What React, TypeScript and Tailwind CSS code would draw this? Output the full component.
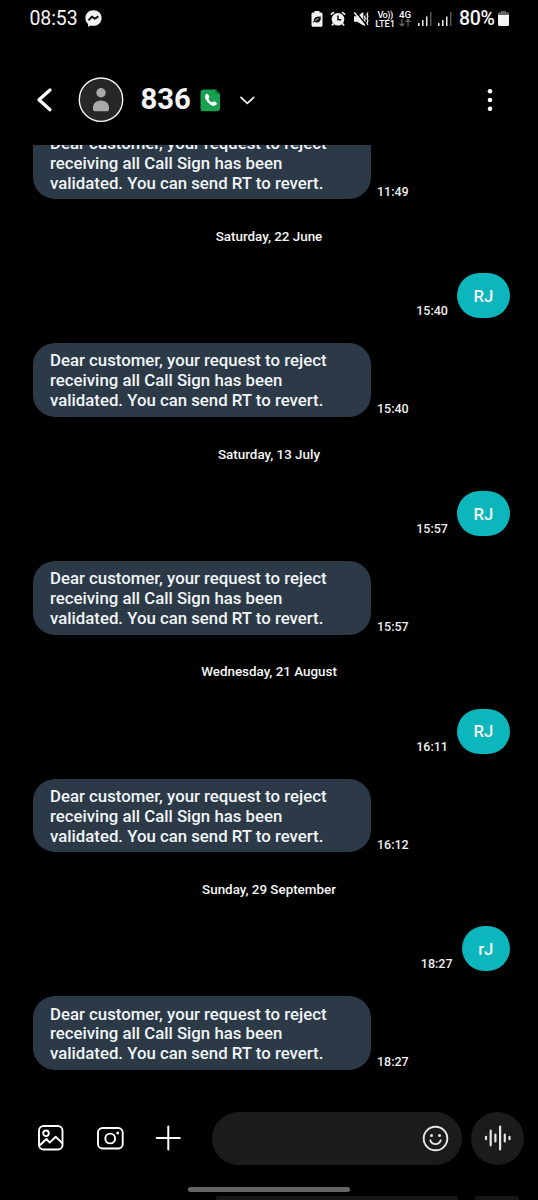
type Exchange = {
  date: string;
  sent: string;
  sentAt: string;
  receivedAt: string;
};

const REPLY = ["Dear customer, your request to reject", "receiving all Call Sign has been", "validated. You can send RT to revert."];

const exchanges: Exchange[] = [
  { date: "Saturday, 22 June", sent: "RJ", sentAt: "15:40", receivedAt: "15:40" },
  { date: "Saturday, 13 July", sent: "RJ", sentAt: "15:57", receivedAt: "15:57" },
  { date: "Wednesday, 21 August", sent: "RJ", sentAt: "16:11", receivedAt: "16:12" },
  { date: "Sunday, 29 September", sent: "rJ", sentAt: "18:27", receivedAt: "18:27" },
];

function SignalBars() {
  return (
    <svg width="14" height="14" viewBox="0 0 14 14" className="shrink-0">
      <path d="M0 11h1.500v3H0zM4 8h1.500v6H4zM8 4.500h1.500V14H8z" fill="#eee" />
      <path d="M12 0h1.500v14H12z" fill="#555" />
    </svg>
  );
}

function StatusBar() {
  return (
    <div className="flex h-[37px] shrink-0 items-center pl-[29.500px] pr-[29px]">
      <span className="w-[48px] text-[19.500px] leading-none tracking-[-0.1px]">08:53</span>
      <svg width="17" height="17" viewBox="0 0 17 17" className="ml-[7.500px]">
        <path d="M8.500.3C3.800.3.400 3.700.400 8c0 2.500 1 4.600 2.700 6V16.800l2.600-1.400c.9.300 1.800.4 2.800.4 4.700 0 8.100-3.400 8.100-7.800S13.200.3 8.500.3z" fill="#f2f2f2" />
        <path d="M3.500 10.300l3.400-3.700 2.800 2.200 3.700-2.400" fill="none" stroke="#111" strokeWidth="1.900" strokeLinejoin="round" />
      </svg>
      <div className="flex-1" />
      <svg width="12" height="16" viewBox="0 0 12 16" className="shrink-0">
        <path d="M3.500 0h5v1.500H10c1 0 1.500.6 1.500 1.500v11.300c0 .9-.6 1.500-1.500 1.500H2c-.9 0-1.500-.6-1.500-1.500V3c0-.9.600-1.500 1.500-1.500h1.500z" fill="#f2f2f2" />
        <path d="M9.800 5.500c.3 4-1 6-3.800 6-1.200 0-2-.4-2.500-1l-1.200 1.300-.6-.6 1.200-1.500C2.500 7 4.800 5.500 9.800 5.500z" fill="#111" />
        <path d="M4.200 9.500L7.300 7.500" stroke="#eee" strokeWidth=".8" />
      </svg>
      <svg width="16" height="16" viewBox="0 0 16 16" className="ml-[7.500px] shrink-0">
        <path d="M.9 3.700L3.900 1.200M15.100 3.700l-3-2.500" stroke="#f2f2f2" strokeWidth="1.700" />
        <circle cx="8" cy="8.300" r="6.300" fill="#f2f2f2" />
        <path d="M8 4.600v4.200h3.200" fill="none" stroke="#111" strokeWidth="1.500" />
        <path d="M3.500 12.500l-1.500 2M12.500 12.500l1.500 2" stroke="#f2f2f2" strokeWidth="1.800" />
      </svg>
      <svg width="15" height="16" viewBox="0 0 15 16" className="ml-[7.500px] shrink-0">
        <path d="M0 5.200h3.300L9.300 1v13.500l-6-3.800H0z" fill="#f2f2f2" />
        <path d="M1.300 0l10 13" stroke="#000" strokeWidth="1.500" />
        <path d="M.3 1.500l10.500 13" stroke="#f2f2f2" strokeWidth="1.500" />
        <path d="M11.300 4.500l-.8 1.500.8 1.500-.8 1.500.8 1.500M13.900 1.500l-.9 1.800.9 2-.9 2.200.9 2.200-.9 2.200.9 2" fill="none" stroke="#f2f2f2" strokeWidth="1.300" />
      </svg>
      <div className="ml-[6.500px] flex w-[20px] flex-col items-center text-[9.300px] font-medium leading-[9px]">
        <span className="tracking-[-0.6px]">Vo))</span>
        <span className="tracking-[-0.1px]">LTE1</span>
      </div>
      <div className="ml-[3.500px] flex w-[13px] flex-col items-center">
        <span className="text-[9.800px] font-medium leading-[9px]">4G</span>
        <svg width="12" height="8" viewBox="0 0 12 8">
          <path d="M3 0v7M.5 4.500L3 7l2.500-2.500M9 7.500v-7M6.500 3L9 .5 11.500 3" fill="none" stroke="#666" strokeWidth="1.200" />
        </svg>
      </div>
      <div className="ml-[6.500px] flex gap-[6px]">
        <SignalBars />
        <SignalBars />
      </div>
      <span className="ml-[7px] w-[36px] whitespace-nowrap text-[19.500px] font-medium leading-none tracking-[-0.3px]">80%</span>
      <svg width="11" height="15" viewBox="0 0 11 15" className="ml-[3px] shrink-0">
        <path d="M3 0h5v1.300h1.500c1 0 1.500.6 1.500 1.500V4H0V2.800c0-.9.500-1.500 1.500-1.500H3z" fill="#666" />
        <path d="M0 4h11v9.500c0 .9-.5 1.500-1.500 1.500h-8C.5 15 0 14.400 0 13.500z" fill="#f5f5f5" />
      </svg>
    </div>
  );
}

function Header() {
  return (
    <header className="flex h-[108px] shrink-0 items-center pb-[17px] pl-[36px] pr-[45px] pt-[35px]">
      <svg width="17" height="26" viewBox="0 0 17 26">
        <path d="M14 3L3 12.800l11 9.900" fill="none" stroke="#fff" strokeWidth="3.300" strokeLinecap="round" strokeLinejoin="round" />
      </svg>
      <svg width="46" height="46" viewBox="0 0 46 46" className="ml-[25px]">
        <circle cx="23" cy="22.700" r="21.700" fill="#272727" stroke="#f4f4f4" strokeWidth="1.400" />
        <circle cx="23" cy="15.700" r="4.700" fill="#aaa" />
        <path d="M15 32.200v-1.500c0-4.300 3.400-7.200 8-7.200s8 2.900 8 7.200v1.500c0 1.300-.8 2-2 2H17c-1.200 0-2-.7-2-2z" fill="#aaa" />
      </svg>
      <h1 className="ml-[16.500px] w-[50px] text-[29.300px] font-bold leading-none">836</h1>
      <svg width="21" height="23" viewBox="0 0 21 23" className="ml-[9.500px]">
        <path d="M3.500.5h12L20 5v14c0 2.200-1 3.300-3.300 3.300H3.500C1.300 22.300.5 21.200.5 19V3.700C.5 1.500 1.500.5 3.500.5z" fill="#16a04f" />
        <path d="M15.500.5L20 5h-2.500c-1.300 0-2-.7-2-2z" fill="#0b7a3c" />
        <path d="M6 5.300c.9-.8 1.700-.6 2.200.2l1 1.700c.4.700.2 1.300-.5 1.900-.5.500.300 1.900 1.200 2.800s2.200 1.700 2.700 1.200c.6-.7 1.200-.9 1.900-.5l1.700 1c.8.500.9 1.300.1 2.100-1.600 1.700-4.300 1.400-7.500-1.500C5.300 11.200 4 7.300 6 5.300z" fill="#fff" />
      </svg>
      <svg width="15" height="9" viewBox="0 0 15 9" className="ml-[19px]">
        <path d="M1 1.300l6.300 6 6.400-6" fill="none" stroke="#f2f2f2" strokeWidth="1.700" strokeLinecap="round" strokeLinejoin="round" />
      </svg>
      <svg width="6" height="24" viewBox="0 0 6 24" className="ml-auto">
        <circle cx="3" cy="3.300" r="2.300" fill="#fff" />
        <circle cx="3" cy="12" r="2.300" fill="#fff" />
        <circle cx="3" cy="20.700" r="2.300" fill="#fff" />
      </svg>
    </header>
  );
}

function Received({ time }: { time: string }) {
  return (
    <div className="flex shrink-0 items-end pl-[33px]">
      <div className="h-[73.700px] w-[338px] rounded-[22px] bg-[#2c3a47] pl-[17px] pt-[8.300px] text-[16.800px] font-medium leading-[19.900px] text-[#f1f5f7]">
        {REPLY.map((line) => (
          <p key={line} className="whitespace-nowrap">{line}</p>
        ))}
      </div>
      <Time value={time} className="mb-[0.5px] ml-[6px]" />
    </div>
  );
}

function Time({ value, className }: { value: string; className: string }) {
  return <time className={`text-[12.500px] font-medium leading-[15px] text-[#eee] ${className}`}>{value}</time>;
}

function Composer() {
  return (
    <footer className="flex h-[54px] shrink-0 items-center pl-[38px] pr-[14px]">
      <svg width="26" height="26" viewBox="0 0 26 26" fill="none" stroke="#fff" strokeWidth="1.900" strokeLinejoin="round">
        <rect x="1" y="1" width="23.500" height="23.500" rx="4.500" />
        <circle cx="8" cy="8.300" r="2.800" />
        <path d="M1.500 20.500l7-6.500 3.200 3.600 6-5.800 6.700 6.600" />
      </svg>
      <svg width="27" height="24" viewBox="0 0 27 24" fill="none" stroke="#fff" strokeWidth="1.900" className="ml-[33px]">
        <rect x="1" y="2" width="24.700" height="20.500" rx="4.500" />
        <circle cx="13.200" cy="12.500" r="4.900" />
        <circle cx="20.700" cy="7" r="1.500" fill="#fff" stroke="none" />
      </svg>
      <svg width="26" height="26" viewBox="0 0 26 26" className="ml-[31px]">
        <path d="M13.300 1.500v23M1.800 13h23" stroke="#fff" strokeWidth="2" strokeLinecap="round" />
      </svg>
      <div className="ml-[31px] flex h-[53px] w-[250px] items-center justify-end rounded-full bg-[#1b1b1b] pr-[13px]">
        <svg width="27" height="27" viewBox="0 0 27 27" fill="none" stroke="#e8e8e8" strokeWidth="1.900">
          <circle cx="13.500" cy="13.500" r="11.800" />
          <circle cx="9.500" cy="10.500" r="1.500" fill="#e8e8e8" stroke="none" />
          <circle cx="17.500" cy="10.500" r="1.500" fill="#e8e8e8" stroke="none" />
          <path d="M8.300 15.300c1.100 2.600 2.900 3.800 5.200 3.800s4.100-1.200 5.200-3.800" strokeLinecap="round" />
        </svg>
      </div>
      <div className="ml-[9px] flex size-[53px] items-center justify-center rounded-full bg-[#1b1b1b]">
        <svg width="28" height="26" viewBox="0 0 28 26" fill="none" stroke="#e5e5e5" strokeWidth="2.200" strokeLinecap="round">
          <path d="M2 11.800v2.400M6.700 5.700v14.600M11.400 9.500v7M16.100 1.500v23M20.800 9.500v7M25.500 11.800v2.400" />
        </svg>
      </div>
    </footer>
  );
}

export default function App() {
  return (
    <div className="flex h-[1200px] w-[538px] flex-col overflow-hidden bg-black font-[Roboto,sans-serif] text-[#f5f5f5]">
      <StatusBar />
      <Header />
      <main className="flex h-[924.900px] shrink-0 flex-col justify-end overflow-hidden">
        <Received time="11:49" />
        {exchanges.map((item) => (
          <section key={item.date} className="shrink-0">
            <h2 className="flex h-[74px] items-center justify-center pt-[2px] text-[13.400px] font-medium">{item.date}</h2>
            <div className="flex h-[45px] items-end justify-end pr-[28px]">
              <Time value={item.sentAt} className="mr-[9px]" />
              <div className="flex h-[45px] items-center rounded-[22.500px] bg-[#0bb7bc] px-[16.600px] pt-[2px] text-[16.800px] font-medium">{item.sent}</div>
            </div>
            <div className="pt-[25px]">
              <Received time={item.receivedAt} />
            </div>
          </section>
        ))}
      </main>
      <div className="h-[41.600px] shrink-0" />
      <Composer />
      <div className="flex h-[34.500px] shrink-0 flex-col pt-[21.500px]">
        <div className="ml-[188px] h-[5.500px] w-[162px] shrink-0 rounded-full bg-[#666]" />
        <div className="ml-[216px] mt-[4px] flex h-[3.500px] gap-[17px]">
          <div className="w-[242px] rounded-t-[3px] bg-[#171717]" />
          <div className="w-[44px] rounded-t-[3px] bg-[#171717]" />
        </div>
      </div>
    </div>
  );
}
